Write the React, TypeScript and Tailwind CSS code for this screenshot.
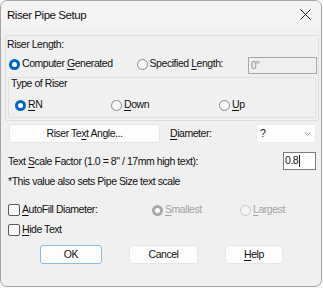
import React from "react";

const F = { fontFamily: '"Liberation Sans", Arial, sans-serif' };

function Radio({ checked = false, disabled = false }: { checked?: boolean; disabled?: boolean }) {
  if (checked && !disabled)
    return (
      <span className="w-[11px] h-[11px] rounded-full bg-[#0067c0] flex items-center justify-center shrink-0">
        <span className="w-[5px] h-[5px] rounded-full bg-white" />
      </span>
    );
  if (checked && disabled)
    return (
      <span className="w-[11px] h-[11px] rounded-full bg-[#a9a9a9] flex items-center justify-center shrink-0">
        <span className="w-[5px] h-[5px] rounded-full bg-white" />
      </span>
    );
  return (
    <span
      className={
        "w-[11px] h-[11px] rounded-full border shrink-0 " +
        (disabled ? "border-[#c9c9c9] bg-[#f3f3f3]" : "border-[#8a8a8a] bg-[#f7f7f7]")
      }
    />
  );
}

function Check() {
  return <span className="w-[12px] h-[12px] rounded-[2px] border border-[#5a5a5a] bg-[#fbfbfb] shrink-0" />;
}

function U({ children }: { children: React.ReactNode }) {
  return <span className="underline decoration-1 underline-offset-[2px]">{children}</span>;
}

export default function App() {
  return (
    <div
      className="w-[323px] h-[288px] bg-[#fbf8f8] overflow-hidden text-[10.5px] tracking-[-0.45px] text-[#111111]"
      style={F}
    >
      <div className="w-[322px] h-[287px] border border-[#a5a5a5] rounded-[7px] bg-[#f0f0f0] flex flex-col overflow-hidden">
        {/* title bar */}
        <div className="h-[26px] bg-[#f4f4f4] flex items-center justify-between pl-[6px] pr-[10px] shrink-0">
          <span className="text-[11.5px] leading-[14px] mt-[1px]">Riser Pipe Setup</span>
          <svg width="11" height="11" viewBox="0 0 11 11" className="mt-[1px]">
            <path d="M0.5 0.5 L10.5 10.5 M10.5 0.5 L0.5 10.5" stroke="#1b1b1b" strokeWidth="1" />
          </svg>
        </div>

        {/* Riser Length group */}
        <div className="mt-[8px] ml-[4px] w-[314px] h-[86px] border border-[#dedede] rounded-[2px] flex flex-col shrink-0">
          <div className="h-[16px] leading-[16px] pl-[1px]">Riser Length:</div>
          <div className="mt-[4px] h-[19px] flex items-start">
            <div className="flex items-center h-[16px] ml-[3px]">
              <Radio checked />
              <span className="ml-[2px]">
                Computer <U>G</U>enerated
              </span>
            </div>
            <div className="flex items-center h-[16px] ml-[24px]">
              <Radio />
              <span className="ml-[2px]">
                Specified <U>L</U>ength:
              </span>
            </div>
            <div className="ml-auto mr-[1px] mt-[1px] w-[69px] h-[17px] border border-[#a8a8a8] bg-[#efefef] text-[#8a8a8a] text-[10px] leading-[15px] pl-[2px]">
              0"
            </div>
          </div>
          <div className="mt-[2px] ml-[2px] w-[308px] h-[41px] border border-[#e0e0e0] rounded-[2px] flex flex-col">
            <div className="h-[13px] leading-[13px] pl-[2px] -mt-[1px]">Type of Riser</div>
            <div className="mt-[7px] h-[16px] flex items-center relative">
              <div className="flex items-center ml-[6px] w-[96px]">
                <Radio checked />
                <span className="ml-[2px]">
                  <U>R</U>N
                </span>
              </div>
              <div className="flex items-center w-[108px]">
                <Radio />
                <span className="ml-[2px]">
                  <U>D</U>own
                </span>
              </div>
              <div className="flex items-center">
                <Radio />
                <span className="ml-[2px]">
                  <U>U</U>p
                </span>
              </div>
            </div>
          </div>
        </div>

        {/* Riser Text Angle row */}
        <div className="mt-[3px] h-[19px] flex items-center shrink-0">
          <div className="ml-[8px] w-[151px] h-[19px] bg-[#fdfdfd] border border-[#e6e6e6] rounded-[3px] flex items-center justify-center">
            Riser Te<U>x</U>t Angle...
          </div>
          <span className="ml-[10px]">
            <U>D</U>iameter:
          </span>
          <div className="ml-auto mr-[5px] w-[60px] h-[19px] bg-[#fdfdfd] border border-[#ececec] rounded-[2px] flex items-center justify-between pl-[3px] pr-[4px]">
            <span>?</span>
            <svg width="7" height="4" viewBox="0 0 7 4">
              <path d="M0.5 0.5 L3.5 3.5 L6.5 0.5" fill="none" stroke="#9a9a9a" strokeWidth="0.9" />
            </svg>
          </div>
        </div>

        {/* Text scale row */}
        <div className="mt-[9px] h-[18px] flex items-center shrink-0">
          <span className="ml-[7px] mt-[2px]">
            Text <U>S</U>cale Factor (1.0 = 8" / 17mm high text):
          </span>
          <div className="ml-auto mr-[5px] -mt-[1px] w-[33px] h-[18px] bg-white border border-[#7d7d7d] flex items-center pl-[1px]">
            <span>0.8</span>
            <span className="w-[1px] h-[12px] bg-[#222] ml-[1px]" />
          </div>
        </div>

        <div className="mt-[4px] h-[14px] leading-[14px] ml-[7px] shrink-0">*This value also sets Pipe Size text scale</div>

        {/* AutoFill row */}
        <div className="mt-[14px] h-[16px] flex items-center shrink-0">
          <div className="flex items-center ml-[7px] w-[144px]">
            <Check />
            <span className="ml-[2px]">
              <U>A</U>utoFill Diameter:
            </span>
          </div>
          <div className="flex items-center w-[88px] text-[#a3a3a3]">
            <Radio checked disabled />
            <span className="ml-[2px]">
              <U>S</U>mallest
            </span>
          </div>
          <div className="flex items-center text-[#a3a3a3]">
            <Radio disabled />
            <span className="ml-[2px]">
              <U>L</U>argest
            </span>
          </div>
        </div>

        <div className="mt-[4px] h-[16px] flex items-center shrink-0">
          <div className="flex items-center ml-[7px]">
            <Check />
            <span className="ml-[2px]">
              <U>H</U>ide Text
            </span>
          </div>
        </div>

        {/* buttons */}
        <div className="mt-[7px] h-[19px] flex items-center shrink-0">
          <div className="ml-[39px] w-[62px] h-[19px] bg-[#fdfdfd] border border-[#8cbbe6] rounded-[3px] flex items-center justify-center">
            OK
          </div>
          <div className="ml-[27px] w-[69px] h-[19px] bg-[#fdfdfd] border border-[#e6e6e6] rounded-[3px] flex items-center justify-center">
            Cancel
          </div>
          <div className="ml-[27px] w-[58px] h-[19px] bg-[#fdfdfd] border border-[#e6e6e6] rounded-[3px] flex items-center justify-center">
            <U>H</U>elp
          </div>
        </div>
      </div>
    </div>
  );
}
